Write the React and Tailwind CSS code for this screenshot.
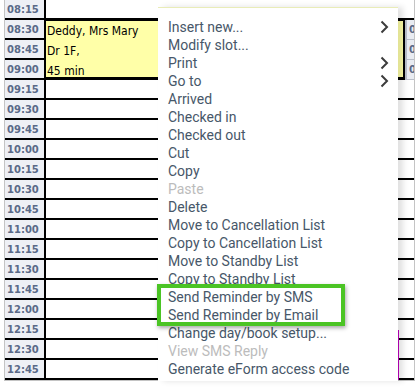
import React from 'react'

const times = [
  '08:15', '08:30', '08:45', '09:00', '09:15', '09:30', '09:45', '10:00', '10:15', '10:30',
  '10:45', '11:00', '11:15', '11:30', '11:45', '12:00', '12:15', '12:30', '12:45',
]

const menuItems = [
  { label: 'Insert new...', sub: true },
  { label: 'Modify slot...' },
  { label: 'Print', sub: true },
  { label: 'Go to', sub: true },
  { label: 'Arrived' },
  { label: 'Checked in' },
  { label: 'Checked out' },
  { label: 'Cut' },
  { label: 'Copy' },
  { label: 'Paste', disabled: true },
  { label: 'Delete' },
  { label: 'Move to Cancellation List' },
  { label: 'Copy to Cancellation List' },
  { label: 'Move to Standby List' },
  { label: 'Copy to Standby List' },
  { label: 'Send Reminder by SMS' },
  { label: 'Send Reminder by Email' },
  { label: 'Change day/book setup...' },
  { label: 'View SMS Reply', disabled: true },
  { label: 'Generate eForm access code' },
]

function Chevron() {
  return (
    <svg width="9" height="14" viewBox="0 0 9 14" fill="none">
      <path d="M1.5 1.5 L7 7 L1.5 12.5" stroke="#3c3c3c" strokeWidth="2" />
    </svg>
  )
}

function TimeCell({ t }) {
  return (
    <div className="h-[20px] border-b-2 border-black bg-[#eef0f5] pl-[2px] flex items-center text-[10px] font-bold text-[#5a6a88] font-['DejaVu_Sans',sans-serif]">
      {t}
    </div>
  )
}

export default function App() {
  const rest = times.slice(4)

  return (
    <div className="bg-white w-[419px] h-[387px] overflow-hidden">
      <div className="relative ml-[4px] w-[411px] border-l border-r border-b border-[#c4c4c4] flex">
        {/* time column */}
        <div className="w-[41px] border-r-2 border-black">
          {times.map((t) => (
            <TimeCell key={t} t={t} />
          ))}
        </div>

        {/* day column */}
        <div className="w-[359px]">
          <div className="h-[20px] border-b-2 border-black" />
          <div className="h-[60px] border-t border-b-[3px] border-r-2 border-black bg-[#ffffa8] pl-[1px] overflow-hidden text-[12px] leading-[20px] text-black font-['DejaVu_Sans_Condensed','DejaVu_Sans',sans-serif]">
            <div>Deddy, Mrs Mary</div>
            <div>Dr 1F,</div>
            <div>45 min</div>
          </div>
          {rest.map((t) => (
            <div key={t} className="h-[20px] border-b-2 border-black" />
          ))}
        </div>

        {/* next column, cut off */}
        <div className="w-[9px] overflow-hidden">
          <div className="h-[20px] border-b-2 border-black" />
          {['08:30', '08:45', '09:00'].map((t) => (
            <div key={t} className="h-[20px] border-l-2 border-b border-[#b9bec9] bg-[#e9ecf2] pl-[2px] flex items-center text-[10px] font-bold text-[#5a6a88] font-['DejaVu_Sans',sans-serif] whitespace-nowrap">
              {t}
            </div>
          ))}
          {rest.map((t) => (
            <div key={t} className="h-[20px] border-b-2 border-black" />
          ))}
        </div>

        <div className="absolute left-[393px] top-[330px] h-[50px] w-px bg-[#c000c0]" />

        {/* context menu */}
        <div className="absolute left-[153px] top-[7px] w-[240px] h-[374px] bg-white border-t border-[#e9ecb8] pt-[10px] shadow-[5px_0_6px_rgba(0,0,0,0.12)] font-['Roboto',sans-serif] text-[14px]">
          {menuItems.map((it) => (
            <div
              key={it.label}
              className={`h-[18px] leading-[18px] pl-[10px] pr-[9px] flex items-center justify-between whitespace-nowrap ${
                it.disabled ? 'text-[#bcbcbc]' : 'text-[#475769]'
              }`}
            >
              <span>{it.label}</span>
              {it.sub && <Chevron />}
            </div>
          ))}
        </div>

        {/* highlight */}
        <div className="absolute left-[152px] top-[284px] w-[188px] h-[42px] border-[4px] border-[#4bc424] shadow-[1px_2px_4px_rgba(0,0,0,0.35)]" />
      </div>
    </div>
  )
}
